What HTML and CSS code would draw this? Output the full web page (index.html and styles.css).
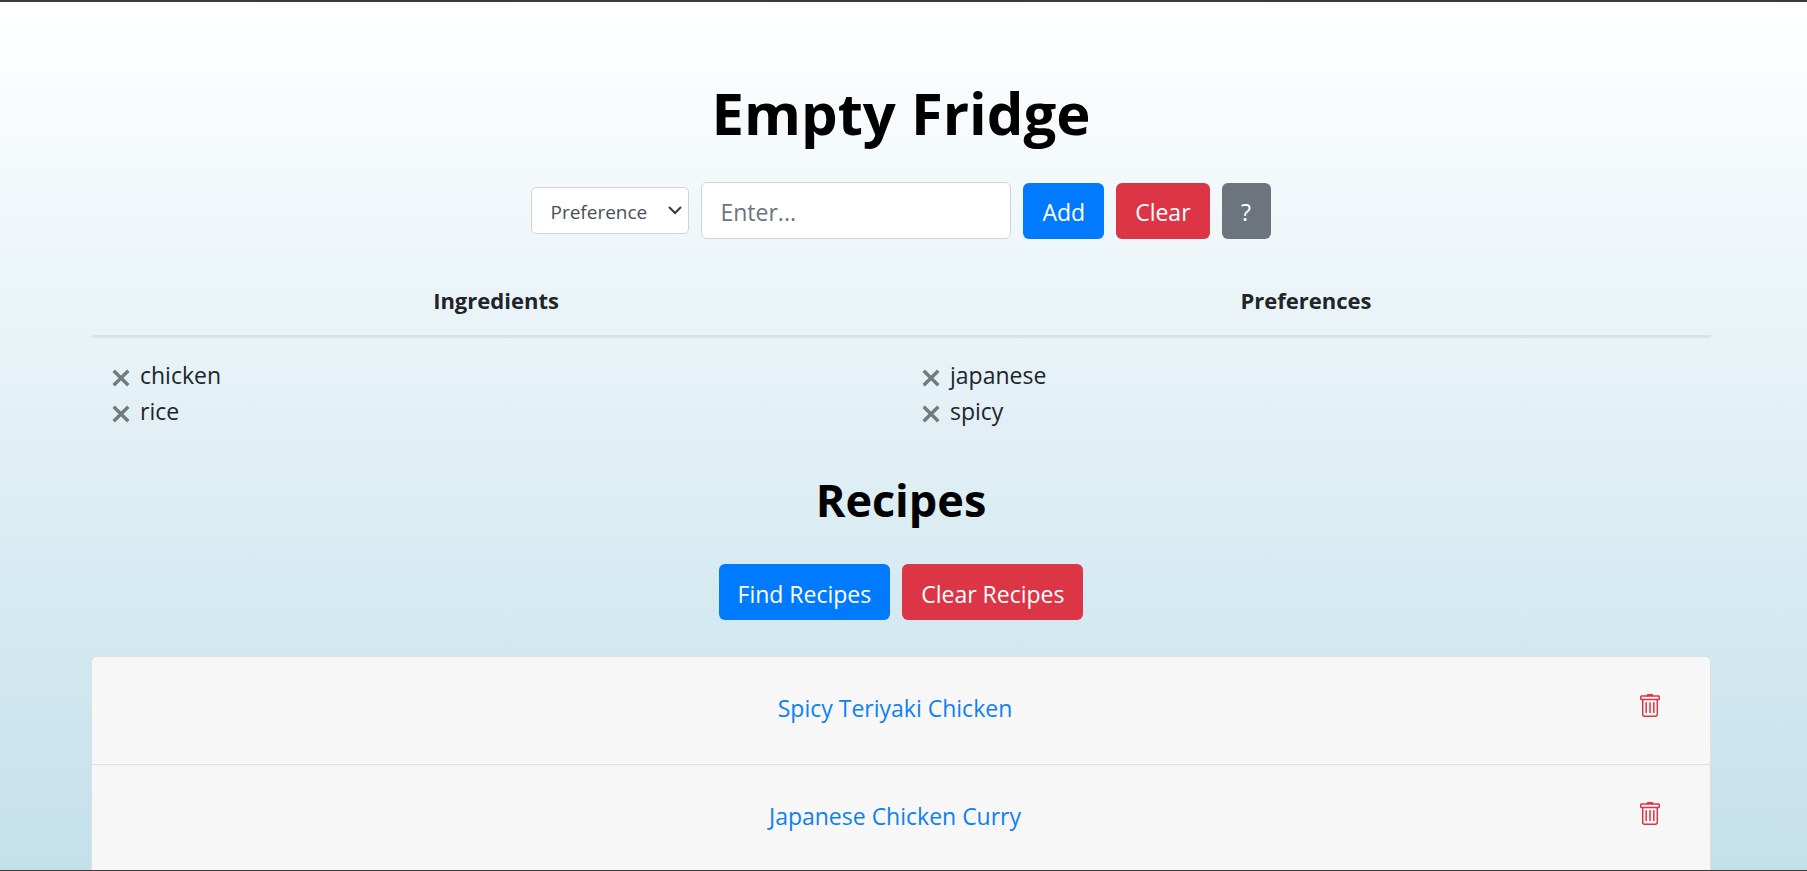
FILE: index.html
```html
<!DOCTYPE html>
<html lang="en">
<head>
<meta charset="utf-8">
<title>Empty Fridge</title>
<link rel="stylesheet" href="styles.css">
</head>
<body>
<svg class="sprite" aria-hidden="true">
  <symbol id="cross" viewBox="0 0 16 16"><path d="M1.500 1.500L14.500 14.500M14.500 1.500L1.500 14.500" fill="none" stroke="#727a7c" stroke-width="3" stroke-linecap="butt"/></symbol>
  <symbol id="trash" viewBox="0 0 20 23">
    <g fill="none" stroke="#dc3545" stroke-width="1.5" stroke-linejoin="round" stroke-linecap="round">
      <path d="M7.5 1.7V1.2Q7.5 .7 8 .7H12Q12.500 .7 12.500 1.2V1.700" fill="#dc3545"/>
      <rect x=".7" y="2" width="18.600" height="3.400" rx="1"/>
      <path d="M2.700 5.400V20.200Q2.700 22.200 4.700 22.200H15.300Q17.300 22.200 17.300 20.200V5.400"/>
      <path d="M6.200 8.800V18.500M10 8.800V18.500M13.800 8.800V18.500"/>
    </g>
  </symbol>
</svg>
<div class="page">
  <main class="content">
    <h1 class="title">Empty Fridge</h1>
    <form class="entry" onsubmit="return false">
      <select class="kind" aria-label="Item type"><option>Ingredient</option><option selected>Preference</option></select>
      <input class="item" type="text" placeholder="Enter..." aria-label="Item">
      <button class="btn blue" type="submit">Add</button>
      <button class="btn red" type="button">Clear</button>
      <button class="btn grey" type="button" aria-label="Help">?</button>
    </form>
    <table class="lists">
      <thead><tr><th scope="col">Ingredients</th><th scope="col">Preferences</th></tr></thead>
      <tbody><tr>
        <td><ul class="items">
          <li><button class="remove" aria-label="Remove chicken"><svg><use href="#cross"/></svg></button>chicken</li>
          <li><button class="remove" aria-label="Remove rice"><svg><use href="#cross"/></svg></button>rice</li>
        </ul></td>
        <td><ul class="items">
          <li><button class="remove" aria-label="Remove japanese"><svg><use href="#cross"/></svg></button>japanese</li>
          <li><button class="remove" aria-label="Remove spicy"><svg><use href="#cross"/></svg></button>spicy</li>
        </ul></td>
      </tr></tbody>
    </table>
    <h2 class="subtitle">Recipes</h2>
    <div class="actions">
      <button class="btn blue" type="button">Find Recipes</button>
      <button class="btn red" type="button">Clear Recipes</button>
    </div>
    <section class="recipes">
      <article class="recipe"><a href="#">Spicy Teriyaki Chicken</a><button class="trash" aria-label="Delete Spicy Teriyaki Chicken"><svg><use href="#trash"/></svg></button></article>
      <article class="recipe"><a href="#">Japanese Chicken Curry</a><button class="trash" aria-label="Delete Japanese Chicken Curry"><svg><use href="#trash"/></svg></button></article>
    </section>
  </main>
</div>
</body>
</html>
```
FILE: styles.css
```css
* { box-sizing: border-box; }

body {
  margin: 0;
  color: #212529;
  font: 23px/36px "Open Sans", "Noto Sans", sans-serif;
}

.sprite { position: absolute; width: 0; height: 0; }

.page {
  height: 100vh;
  overflow: hidden;
  border-top: 2px solid #3c3a3b;
  border-bottom: 1px solid #3b3b3b;
  background: linear-gradient(#fff, #c3e0eb);
}

.content { padding: 75px 96px 0 91px; }

.title, .subtitle {
  margin: 0;
  color: #000;
  font-weight: 700;
  text-align: center;
}

.title { font-size: 58px; line-height: 72px; }
.subtitle { margin-top: 23px; font-size: 45px; line-height: 60px; }

.entry, .actions {
  display: flex;
  justify-content: center;
  align-items: center;
  gap: 12px;
}

.entry { margin-top: 33px; }
.actions { margin-top: 34px; }

.kind, .item {
  border: 1px solid #ced4da;
  background-color: #fff;
  font-family: inherit;
}

.kind {
  width: 158px;
  height: 47px;
  padding: 2px 18px 0;
  border-radius: 5px;
  appearance: none;
  background-image: url("data:image/svg+xml,%3Csvg xmlns='http://www.w3.org/2000/svg' width='14' height='9'%3E%3Cpath d='M1 1l6 6 6-6' fill='none' stroke='%23343a40' stroke-width='2'/%3E%3C/svg%3E");
  background-repeat: no-repeat;
  background-position: right 6px top 18px;
  color: #495057;
  font-size: 19px;
}

.item {
  width: 310px;
  height: 57px;
  padding: 3px 18px 0;
  border-radius: 6px;
  font-size: 23px;
}

.item::placeholder { color: #6c757d; opacity: 1; }

.btn {
  min-width: 49px;
  height: 56px;
  padding: 3px 19px 0;
  border: 0;
  border-radius: 6px;
  color: #fff;
  font: inherit;
}

.blue { background: #007bff; }
.red { background: #dc3545; }
.grey { background: #6c757d; }

.lists {
  width: 100%;
  margin-top: 24px;
  border-collapse: collapse;
  table-layout: fixed;
}

.lists th {
  padding: 19px 18px 17px;
  border-bottom: 3px solid #dee2e6;
  font-size: 22px;
  font-weight: 700;
}

.lists td { padding: 19px 21px 18px; }

.items { margin: 0; padding: 0; list-style: none; }
.items li { display: flex; align-items: center; gap: 10px; }

.remove, .trash {
  display: block;
  padding: 0;
  border: 0;
  background: none;
}

.remove { padding-top: 5px; }
.remove svg { display: block; width: 18px; height: 18px; }

.recipes {
  margin-top: 36px;
  border: 1px solid #dfdfdf;
  border-radius: 6px 6px 0 0;
  background: #f7f7f7;
}

.recipe {
  display: grid;
  grid-template-columns: 96px 1fr 96px;
  align-items: center;
  height: 108px;
  padding: 0 12px 6px 0;
  border-bottom: 1px solid #dfdfdf;
}

.recipe a {
  grid-column: 2;
  justify-self: center;
  color: #0f80f2;
  text-decoration: none;
}

.trash { justify-self: center; padding-bottom: 4px; }
.trash svg { display: block; width: 20px; height: 23px; }
```
